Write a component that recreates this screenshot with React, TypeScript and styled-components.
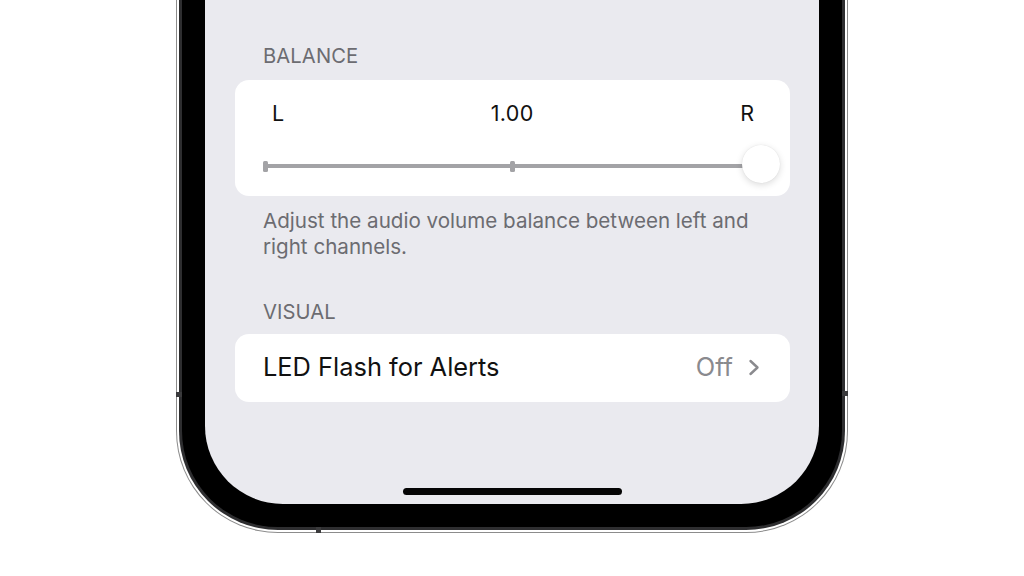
import React from "react";
import styled, { createGlobalStyle } from "styled-components";

const Global = createGlobalStyle`
  html, body { margin: 0; padding: 0; background: #ffffff; }
  body { font-family: Inter, "Noto Sans", "Liberation Sans", sans-serif; -webkit-font-smoothing: antialiased; }
`;

const Page = styled.div`
  width: 1024px;
  height: 576px;
  overflow: hidden;
  display: flex;
  justify-content: center;
  align-items: flex-start;
  background: #ffffff;
`;

const PhoneOuter = styled.div`
  position: relative;
  width: 672px;
  height: 533px;
  box-sizing: border-box;
  border: 1px solid #8c8c8c;
  border-top: none;
  border-radius: 0 0 102px 102px;
  padding: 0 2px 2px 2px;
  background: #ffffff;
  display: flex;
`;

const Bezel = styled.div`
  flex: 1;
  box-sizing: border-box;
  border: 3px solid #2e2e30;
  border-top: none;
  border-radius: 0 0 99px 99px;
  background: #000000;
  padding: 0 23px 23px 23px;
  display: flex;
`;

const Antenna = styled.span<{ $side: "left" | "right" | "bottom" }>`
  position: absolute;
  background: #3a3a3c;
  ${(p) =>
    p.$side === "left"
      ? "left: -1px; top: 392px; width: 6px; height: 5px;"
      : p.$side === "right"
      ? "right: -1px; top: 391px; width: 6px; height: 5px;"
      : "left: 139px; bottom: -1px; width: 5px; height: 6px;"}
`;

const Screen = styled.div`
  position: relative;
  flex: 1;
  background: #eaeaef;
  border-radius: 0 0 78px 78px;
  padding: 44px 29px 0 30px;
  display: flex;
  flex-direction: column;
  overflow: hidden;
`;

const SectionHeader = styled.div<{ $top?: number; $bottom?: number }>`
  margin-top: ${(p) => p.$top ?? 0}px;
  margin-bottom: ${(p) => p.$bottom ?? 12}px;
  padding: 0 28px;
  font-size: 20.2px;
  line-height: 24px;
  letter-spacing: 0.1px;
  color: #6c6c71;
  text-transform: uppercase;
`;

const Card = styled.div`
  background: #ffffff;
  border-radius: 14px;
`;

const BalanceCard = styled(Card)`
  padding: 20px 0 13px 0;
  display: flex;
  flex-direction: column;
  gap: 19px;
`;

const LabelRow = styled.div`
  display: flex;
  justify-content: space-between;
  align-items: baseline;
  padding: 0 36px 0 37px;
  font-size: 21.5px;
  line-height: 26px;
  color: #111111;
`;

const Label = styled.span``;

const Value = styled.span`
  letter-spacing: 0.3px;
`;

const SliderArea = styled.div`
  position: relative;
  height: 38px;
  margin: 0 29px 0 28px;
`;

const Track = styled.div`
  position: absolute;
  left: 0;
  right: 0;
  top: 19px;
  height: 4px;
  background: #a3a3a6;
  border-radius: 1px;
`;

const Tick = styled.div<{ $pos: string }>`
  position: absolute;
  top: 15.5px;
  left: ${(p) => p.$pos};
  width: 5px;
  height: 11px;
  margin-left: ${(p) => (p.$pos === "0%" ? "0" : "-2.5px")};
  background: #a3a3a6;
  border-radius: 1.5px;
`;

const Thumb = styled.div`
  position: absolute;
  right: -19px;
  top: 0;
  width: 38px;
  height: 38px;
  border-radius: 50%;
  background: #ffffff;
  box-shadow: 0 2px 7px rgba(0, 0, 0, 0.14), 0 0 1px rgba(0, 0, 0, 0.12);
`;

const Footer = styled.div`
  margin-top: 12px;
  padding: 0 28px;
  font-size: 20.6px;
  line-height: 25.5px;
  color: #6c6c71;
`;

const RowCard = styled(Card)`
  display: flex;
  align-items: center;
  justify-content: space-between;
  height: 68px;
  box-sizing: border-box;
  padding: 0 30px 2px 28px;
`;

const RowTitle = styled.span`
  font-size: 25.4px;
  line-height: 30px;
  color: #111111;
`;

const RowValue = styled.span`
  display: flex;
  align-items: center;
  gap: 15px;
  font-size: 25.4px;
  line-height: 30px;
  color: #8a8a8e;
`;

const HomeIndicator = styled.div`
  position: absolute;
  left: 50%;
  bottom: 9px;
  width: 219px;
  height: 7px;
  margin-left: -109.5px;
  border-radius: 4px;
  background: #050505;
`;

const Chevron = () => (
  <svg width="12" height="17" viewBox="0 0 12 17" fill="none">
    <polyline
      points="2.5,2 9.5,8.5 2.5,15"
      stroke="#8a8a8e"
      strokeWidth="2.4"
      strokeLinecap="round"
      strokeLinejoin="round"
    />
  </svg>
);

export default function App() {
  return (
    <>
      <Global />
      <Page>
        <PhoneOuter>
          <Antenna $side="left" />
          <Antenna $side="right" />
          <Antenna $side="bottom" />
          <Bezel>
            <Screen>
              <SectionHeader>Balance</SectionHeader>
              <BalanceCard>
                <LabelRow>
                  <Label>L</Label>
                  <Value>1.00</Value>
                  <Label>R</Label>
                </LabelRow>
                <SliderArea>
                  <Track />
                  <Tick $pos="0%" />
                  <Tick $pos="50%" />
                  <Thumb />
                </SliderArea>
              </BalanceCard>
              <Footer>
                Adjust the audio volume balance between left and right channels.
              </Footer>
              <SectionHeader $top={41} $bottom={10}>Visual</SectionHeader>
              <RowCard>
                <RowTitle>LED Flash for Alerts</RowTitle>
                <RowValue>
                  Off
                  <Chevron />
                </RowValue>
              </RowCard>
              <HomeIndicator />
            </Screen>
          </Bezel>
        </PhoneOuter>
      </Page>
    </>
  );
}
